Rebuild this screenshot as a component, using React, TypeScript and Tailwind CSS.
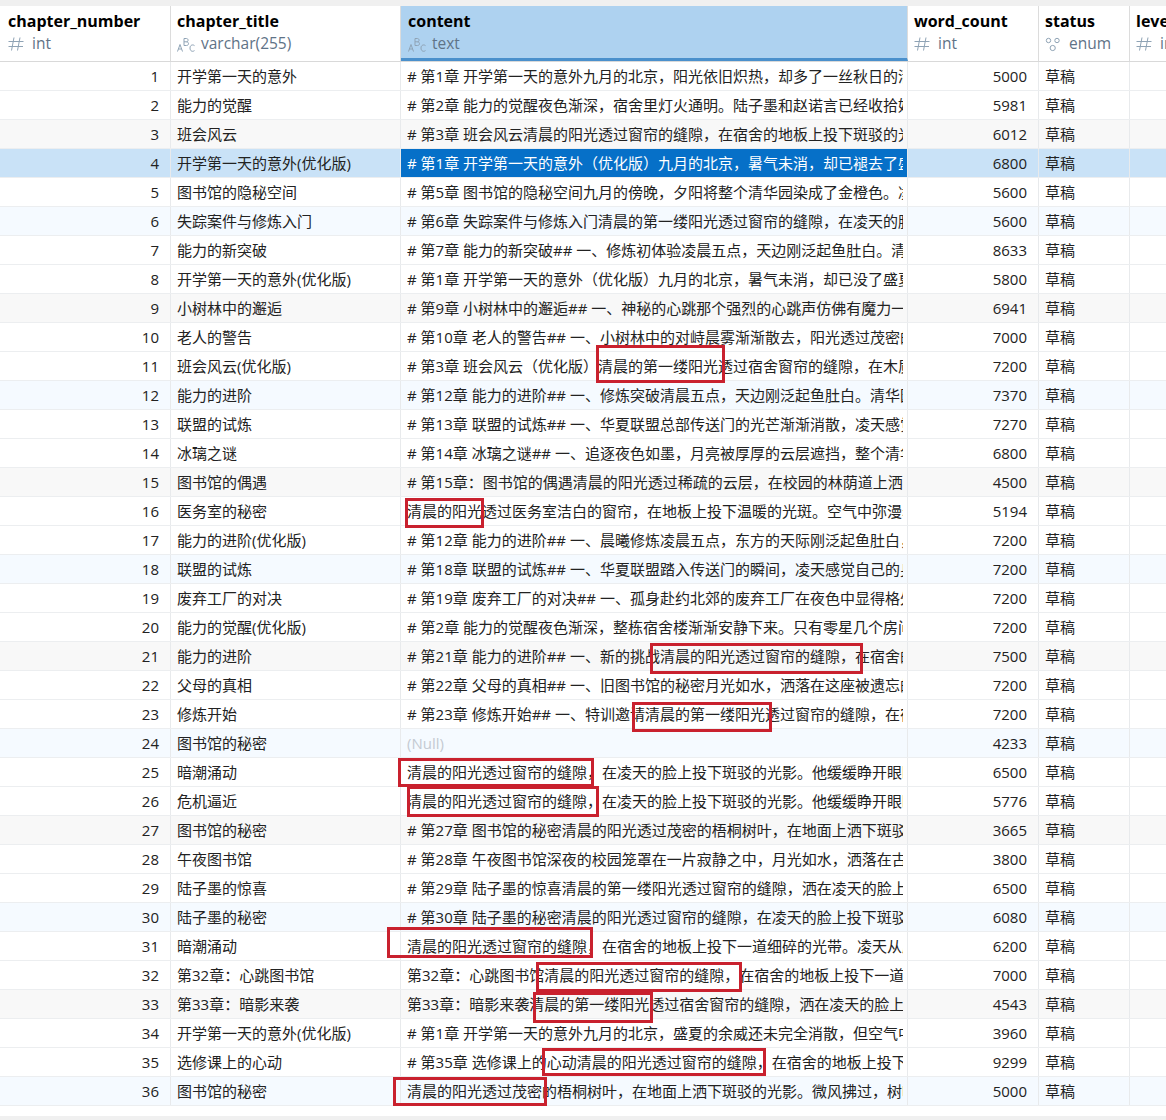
const rows: [number, string, string, number][] = [
  [1, "开学第一天的意外", "# 第1章 开学第一天的意外九月的北京，阳光依旧炽热，却多了一丝秋日的清爽。", 5000],
  [2, "能力的觉醒", "# 第2章 能力的觉醒夜色渐深，宿舍里灯火通明。陆子墨和赵诺言已经收拾好了", 5981],
  [3, "班会风云", "# 第3章 班会风云清晨的阳光透过窗帘的缝隙，在宿舍的地板上投下斑驳的光影", 6012],
  [4, "开学第一天的意外(优化版)", "# 第1章 开学第一天的意外（优化版）九月的北京，暑气未消，却已褪去了盛夏", 6800],
  [5, "图书馆的隐秘空间", "# 第5章 图书馆的隐秘空间九月的傍晚，夕阳将整个清华园染成了金橙色。凌天", 5600],
  [6, "失踪案件与修炼入门", "# 第6章 失踪案件与修炼入门清晨的第一缕阳光透过窗帘的缝隙，在凌天的脸上", 5600],
  [7, "能力的新突破", "# 第7章 能力的新突破## 一、修炼初体验凌晨五点，天边刚泛起鱼肚白。清华园", 8633],
  [8, "开学第一天的意外(优化版)", "# 第1章 开学第一天的意外（优化版）九月的北京，暑气未消，却已没了盛夏的", 5800],
  [9, "小树林中的邂逅", "# 第9章 小树林中的邂逅## 一、神秘的心跳那个强烈的心跳声仿佛有魔力一般", 6941],
  [10, "老人的警告", "# 第10章 老人的警告## 一、小树林中的对峙晨雾渐渐散去，阳光透过茂密的枝叶", 7000],
  [11, "班会风云(优化版)", "# 第3章 班会风云（优化版）清晨的第一缕阳光透过宿舍窗帘的缝隙，在木质地板", 7200],
  [12, "能力的进阶", "# 第12章 能力的进阶## 一、修炼突破清晨五点，天边刚泛起鱼肚白。清华园", 7370],
  [13, "联盟的试炼", "# 第13章 联盟的试炼## 一、华夏联盟总部传送门的光芒渐渐消散，凌天感觉", 7270],
  [14, "冰璃之谜", "# 第14章 冰璃之谜## 一、追逐夜色如墨，月亮被厚厚的云层遮挡，整个清华园", 6800],
  [15, "图书馆的偶遇", "# 第15章：图书馆的偶遇清晨的阳光透过稀疏的云层，在校园的林荫道上洒下", 4500],
  [16, "医务室的秘密", "清晨的阳光透过医务室洁白的窗帘，在地板上投下温暖的光斑。空气中弥漫着", 5194],
  [17, "能力的进阶(优化版)", "# 第12章 能力的进阶## 一、晨曦修炼凌晨五点，东方的天际刚泛起鱼肚白，", 7200],
  [18, "联盟的试炼", "# 第18章 联盟的试炼## 一、华夏联盟踏入传送门的瞬间，凌天感觉自己的身体", 7200],
  [19, "废弃工厂的对决", "# 第19章 废弃工厂的对决## 一、孤身赴约北郊的废弃工厂在夜色中显得格外", 7200],
  [20, "能力的觉醒(优化版)", "# 第2章 能力的觉醒夜色渐深，整栋宿舍楼渐渐安静下来。只有零星几个房间", 7200],
  [21, "能力的进阶", "# 第21章 能力的进阶## 一、新的挑战清晨的阳光透过窗帘的缝隙，在宿舍的地板", 7500],
  [22, "父母的真相", "# 第22章 父母的真相## 一、旧图书馆的秘密月光如水，洒落在这座被遗忘的", 7200],
  [23, "修炼开始", "# 第23章 修炼开始## 一、特训邀请清晨的第一缕阳光透过窗帘的缝隙，在宿舍", 7200],
  [24, "图书馆的秘密", "", 4233],
  [25, "暗潮涌动", "清晨的阳光透过窗帘的缝隙，在凌天的脸上投下斑驳的光影。他缓缓睁开眼睛", 6500],
  [26, "危机逼近", "清晨的阳光透过窗帘的缝隙，在凌天的脸上投下斑驳的光影。他缓缓睁开眼睛", 5776],
  [27, "图书馆的秘密", "# 第27章 图书馆的秘密清晨的阳光透过茂密的梧桐树叶，在地面上洒下斑驳的", 3665],
  [28, "午夜图书馆", "# 第28章 午夜图书馆深夜的校园笼罩在一片寂静之中，月光如水，洒落在古老的", 3800],
  [29, "陆子墨的惊喜", "# 第29章 陆子墨的惊喜清晨的第一缕阳光透过窗帘的缝隙，洒在凌天的脸上，", 6500],
  [30, "陆子墨的秘密", "# 第30章 陆子墨的秘密清晨的阳光透过窗帘的缝隙，在凌天的脸上投下斑驳的", 6080],
  [31, "暗潮涌动", "清晨的阳光透过窗帘的缝隙，在宿舍的地板上投下一道细碎的光带。凌天从床上", 6200],
  [32, "第32章：心跳图书馆", "第32章：心跳图书馆清晨的阳光透过窗帘的缝隙，在宿舍的地板上投下一道细碎", 7000],
  [33, "第33章：暗影来袭", "第33章：暗影来袭清晨的第一缕阳光透过宿舍窗帘的缝隙，洒在凌天的脸上，", 4543],
  [34, "开学第一天的意外(优化版)", "# 第1章 开学第一天的意外九月的北京，盛夏的余威还未完全消散，但空气中已", 3960],
  [35, "选修课上的心动", "# 第35章 选修课上的心动清晨的阳光透过窗帘的缝隙，在宿舍的地板上投下一道", 9299],
  [36, "图书馆的秘密", "清晨的阳光透过茂密的梧桐树叶，在地面上洒下斑驳的光影。微风拂过，树叶", 5000],
];

// red marks drawn over the screenshot: left, top, width, height
const marks = [
  [596, 345, 129, 38],
  [405, 498, 79, 30],
  [650, 643, 213, 31],
  [632, 702, 140, 30],
  [398, 758, 196, 29],
  [407, 786, 192, 31],
  [387, 927, 206, 31],
  [536, 962, 206, 30],
  [533, 992, 120, 31],
  [542, 1048, 224, 28],
  [393, 1077, 154, 29],
];

function HashIcon() {
  return (
    <svg width="16" height="16" viewBox="0 0 16 16" fill="none" stroke="#8fa3b5" strokeWidth="1">
      <path d="M6 1.5 3.5 14.5M12 1.5 9.5 14.5M0.5 5.5H15.5M0.5 10.5H15" />
    </svg>
  );
}

function AbcIcon() {
  return (
    <svg width="18" height="16" viewBox="0 0 18 16" fill="none" stroke="#8fa3b5" strokeWidth="1">
      <path d="M0.5 15.5 3 8.5 5.5 15.5M1.4 13H4.6" />
      <path d="M7 9.5V2.5H9.5C11.6 2.5 11.6 5.8 9.5 5.8H7M9.5 5.8C12.2 5.8 12.2 9.5 9.5 9.5H7" />
      <path d="M17.5 9.6C15.8 8.2 13 9 13 12C13 15.4 15.8 16 17.5 14.6" />
    </svg>
  );
}

function EnumIcon() {
  return (
    <svg width="16" height="16" viewBox="0 0 16 16" fill="none" stroke="#8fa3b5" strokeWidth="1">
      <circle cx="3.5" cy="4.5" r="2.2" />
      <circle cx="12" cy="4.5" r="2.2" />
      <circle cx="7.7" cy="12" r="2.6" />
    </svg>
  );
}

function Head({ name, type, icon, className }: { name: string; type: string; icon: React.ReactNode; className: string }) {
  return (
    <div className={`h-[55px] shrink-0 overflow-hidden whitespace-nowrap border-r border-[#dcdcdc] pt-[5px] ${className}`}>
      <div className="text-[16px] font-bold leading-[21px] text-black">{name}</div>
      <div className="mt-px flex items-center text-[15.5px] leading-[21px] text-[#5f7387]">
        <span className="flex w-[24px] shrink-0">{icon}</span>
        <span>{type}</span>
      </div>
    </div>
  );
}

export default function App() {
  return (
    <div className="relative flex h-[1120px] w-[1166px] flex-col overflow-hidden bg-white font-['Open_Sans','Noto_Sans_CJK_SC',sans-serif] text-[15px] text-[#222]">
      <div className="h-[6px] shrink-0 bg-[#f0f0f0]" />
      <div className="flex shrink-0 border-b border-[#d9d9d9]">
        <Head name="chapter_number" type="int" icon={<HashIcon />} className="w-[171px] pl-2" />
        <Head name="chapter_title" type="varchar(255)" icon={<AbcIcon />} className="w-[230px] pl-[6px]" />
        <Head name="content" type="text" icon={<AbcIcon />} className="w-[507px] border-b-[3px] border-b-[#4a90cc] bg-[#aed2f0] pl-[7px]" />
        <Head name="word_count" type="int" icon={<HashIcon />} className="w-[131px] pl-[6px]" />
        <Head name="status" type="enum" icon={<EnumIcon />} className="w-[91px] pl-[6px]" />
        <Head name="level" type="int" icon={<HashIcon />} className="w-[60px] pl-[6px]" />
      </div>

      {rows.map(([num, title, content, words]) => {
        const selected = num === 4;
        let bg = "bg-white";
        if (selected) bg = "bg-[#c9e2f7]";
        else if (num % 6 === 3) bg = "bg-[#f8f8f8]";
        else if (num % 6 === 0) bg = "bg-[#f5faff]";
        return (
          <div key={num} className={`flex h-[29px] shrink-0 border-b border-[#eceef0] leading-[28px] ${bg}`}>
            <div className="w-[171px] shrink-0 border-r border-[#e8eaec] pr-[11px] text-right">{num}</div>
            <div className="w-[230px] shrink-0 overflow-hidden whitespace-nowrap border-r border-[#e8eaec] pl-[6px]">{title}</div>
            <div className={`w-[507px] shrink-0 border-r border-[#e8eaec] pl-[6px] pr-[4px] ${selected ? "bg-[#0670c8] text-white" : ""}`}>
              <div className="overflow-hidden whitespace-nowrap">
                {content || <span className="text-[#c4cad2]">(Null)</span>}
              </div>
            </div>
            <div className="w-[131px] shrink-0 border-r border-[#e8eaec] pr-[11px] text-right">{words}</div>
            <div className="w-[91px] shrink-0 border-r border-[#e8eaec] pl-[6px]">草稿</div>
            <div className="w-[36px] shrink-0" />
          </div>
        );
      })}

      <div className="flex-1" />
      <div className="h-[4px] shrink-0 bg-[#f0f0f0]" />

      {marks.map(([left, top, width, height]) => (
        <div
          key={top}
          className="absolute border-[3px] border-[#c9212e]"
          style={{ left, top, width, height }}
        />
      ))}
    </div>
  );
}
